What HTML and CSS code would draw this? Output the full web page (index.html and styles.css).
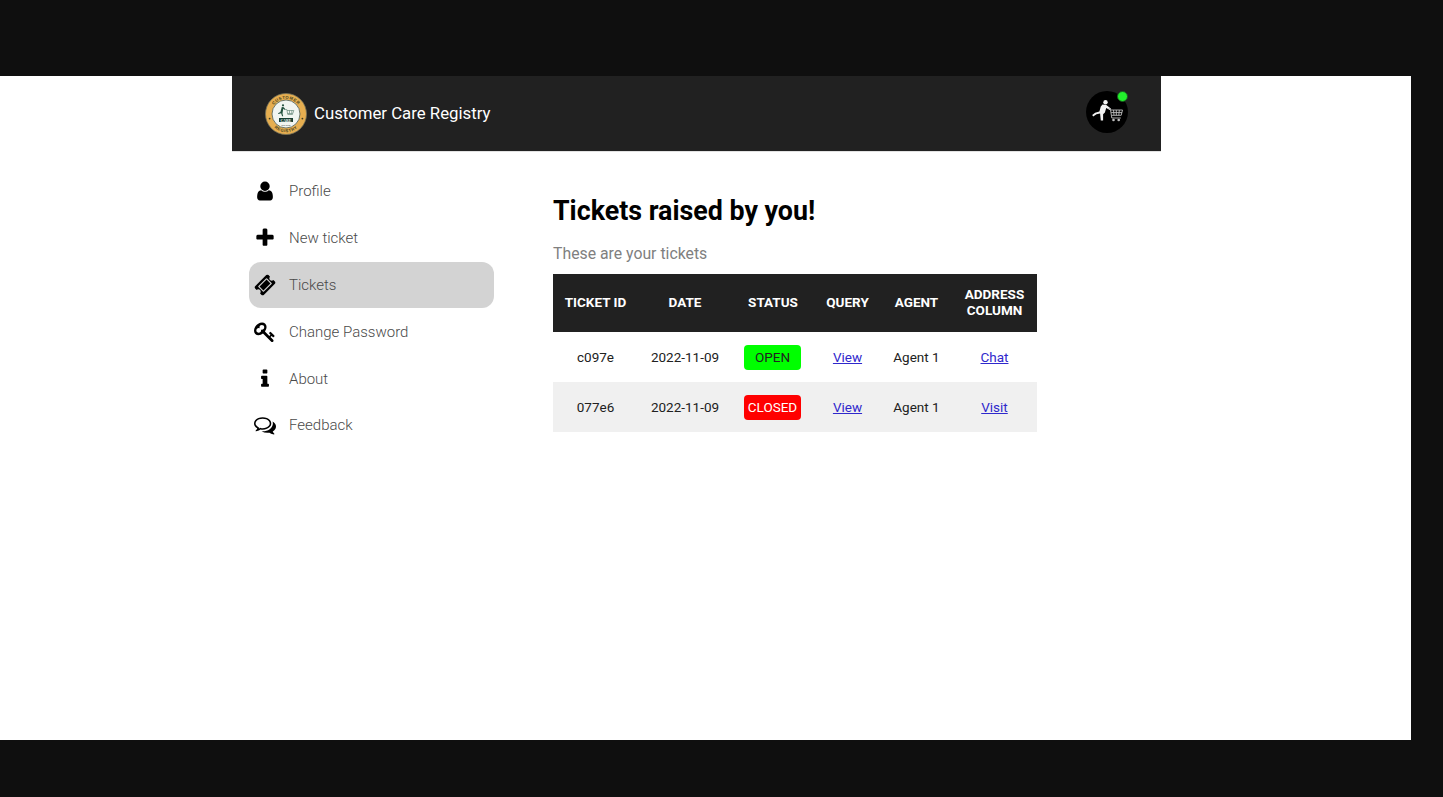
FILE: index.html
```html
<!DOCTYPE html>
<html lang="en">
<head>
<meta charset="utf-8">
<title>Customer Care Registry</title>
<link rel="stylesheet" href="styles.css">
</head>
<body>
<div class="stage">
  <div class="app">
    <header class="navbar">
      <div class="brand">
        <svg class="logo" viewBox="0 0 42 42">
          <defs>
            <path id="arcTop" d="M5.800 21a15.200 15.200 0 0 1 30.400 0"/>
            <path id="arcBottom" d="M2.900 21a18.100 18.100 0 0 0 36.200 0"/>
          </defs>
          <circle cx="21" cy="21" r="20.500" fill="#e6ae50" stroke="#77745c" stroke-width=".8"/>
          <circle cx="21" cy="21" r="14" fill="#f1f5f1" stroke="#4c5a50" stroke-width=".8"/>
          <text class="logo-arc"><textPath href="#arcTop" startOffset="50%" text-anchor="middle">CUSTOMER</textPath></text>
          <text class="logo-arc"><textPath href="#arcBottom" startOffset="50%" text-anchor="middle">REGISTRY</textPath></text>
          <circle cx="18" cy="12.300" r="1.100" fill="#23523f"/>
          <path d="M16.800 14l2 .3 1.800 2.300-.6.5-1.700-1.300-.6 3.200-.2 1.500.7 2.700h-1.100l-1-3-2.600.8-.5-.8 2.400-1.300z" fill="#23523f"/>
          <path d="M20.500 16.500h1.300l1 5h5M22 17.500h6.800l-1 3h-5.300M24.500 17.500v3M26.800 17.500v3" fill="none" stroke="#54786a" stroke-width=".6"/>
          <rect x="14" y="25" width="14" height="4" fill="#173f33"/>
          <text class="logo-care" x="21" y="28.500">CARE</text>
          <text class="logo-est" x="21" y="32.500">EST 2022</text>
          <circle cx="4.600" cy="25.600" r=".9" fill="#3c3a20"/>
          <circle cx="37.400" cy="25.600" r=".9" fill="#3c3a20"/>
        </svg>
        <span class="brand-name">Customer Care Registry</span>
      </div>
      <div class="avatar">
        <svg class="avatar-art" viewBox="0 0 42 42">
          <circle cx="21" cy="21" r="21" fill="#000"/>
          <circle cx="19.500" cy="11.200" r="2.200" fill="#f2f2f2"/>
          <path d="M16.500 13.600l3.800.4 4.500 3.500-1 1.400-3.600-2-1.300 4.500-1.800 1.800 0 6.200h-2.300l-.7-6.800-3.600.6-3.300 2.300-1-1.400 2.900-2.400 4.300-1.300 1.400-4.800z" fill="#f2f2f2"/>
          <path d="M22.300 17.500h2l1.500 9.500h9M24.700 19h11.800l-1.300 5.300h-9.600M27.500 19l.5 5.300M30.300 19v5.300M33.300 19l-.5 5.300M25.100 21.600h10.900" fill="none" stroke="#bdbdbd" stroke-width=".9"/>
          <circle cx="27.500" cy="29" r="1.300" fill="#bdbdbd"/>
          <circle cx="32.700" cy="29" r="1.300" fill="#bdbdbd"/>
        </svg>
        <span class="status-dot"></span>
      </div>
    </header>

    <div class="content">
      <nav class="sidebar">
        <a class="side-item">
          <span class="side-icon"><svg viewBox="0 0 1792 1792"><path d="M1536 1399q0 109-62.500 187t-150.500 78h-854q-88 0-150.500-78t-62.500-187q0-85 8.500-160.500t31.500-152 58.500-131 94-89 134.500-34.500q131 128 313 128t313-128q76 0 134.500 34.500t94 89 58.500 131 31.500 152 8.500 160.500zm-256-887q0 159-112.500 271.500t-271.500 112.500-271.500-112.500-112.500-271.500 112.500-271.500 271.500-112.500 271.500 112.500 112.500 271.500z"/></svg></span>
          <span>Profile</span>
        </a>
        <a class="side-item">
          <span class="side-icon"><svg viewBox="0 0 1792 1792"><path d="M1600 736v192q0 40-28 68t-68 28h-416v416q0 40-28 68t-68 28h-192q-40 0-68-28t-28-68v-416h-416q-40 0-68-28t-28-68v-192q0-40 28-68t68-28h416v-416q0-40 28-68t68-28h192q40 0 68 28t28 68v416h416q40 0 68 28t28 68z"/></svg></span>
          <span>New ticket</span>
        </a>
        <a class="side-item active">
          <span class="side-icon"><svg viewBox="0 0 1792 1792"><path d="M1024 452l316 316-572 572-316-316zm-211 979l618-618q19-19 19-45t-19-45l-362-362q-18-18-45-18t-45 18l-618 618q-19 19-19 45t19 45l362 362q18 18 45 18t45-18zm889-637l-907 908q-37 37-90.500 37t-90.500-37l-126-126q56-56 56-136t-56-136-136-56-136 56l-125-126q-37-37-37-90.500t37-90.500l907-906q37-37 90.500-37t90.500 37l125 125q-56 56-56 136t56 136 136 56 136-56l126 125q37 37 37 90.500t-37 90.500z"/></svg></span>
          <span>Tickets</span>
        </a>
        <a class="side-item">
          <span class="side-icon"><svg viewBox="0 0 1792 1792"><path d="M832 512q0-80-56-136t-136-56-136 56-56 136q0 42 19 83-41-19-83-19-80 0-136 56t-56 136 56 136 136 56 136-56 56-136q0-42-19-83 41 19 83 19 80 0 136-56t56-136zm851 704q0 17-49 66t-66 49q-9 0-28.500-16t-36.500-33-38.500-40-24.500-26l-96 96 220 220q28 28 28 68 0 42-39 81t-81 39q-40 0-68-28l-671-671q-176 131-365 131-163 0-265.500-102.500t-102.500-265.500q0-160 95-313t248-248 313-95q163 0 265.500 102.500t102.500 265.500q0 189-131 365l355 355 96-96q-3-3-26-24.500t-40-38.500-33-36.500-16-28.500q0-17 49-66t66-49q13 0 23 10 6 6 46 44.500t82 79.500 86.500 86 73 78 28.500 41z"/></svg></span>
          <span>Change Password</span>
        </a>
        <a class="side-item">
          <span class="side-icon"><svg viewBox="0 0 1792 1792"><path d="M1216 1344v128q0 26-19 45t-45 19h-512q-26 0-45-19t-19-45v-128q0-26 19-45t45-19h64v-384h-64q-26 0-45-19t-19-45v-128q0-26 19-45t45-19h384q26 0 45 19t19 45v576h64q26 0 45 19t19 45zm-128-1152v192q0 26-19 45t-45 19h-256q-26 0-45-19t-19-45v-192q0-26 19-45t45-19h256q26 0 45 19t19 45z"/></svg></span>
          <span>About</span>
        </a>
        <a class="side-item">
          <span class="side-icon"><svg viewBox="0 0 1792 1792"><path d="M704 384q-153 0-286 52t-211.500 141-78.500 191q0 82 53 158t149 132l97 56-35 84q34-20 62-39l44-31 53 10q78 14 153 14 153 0 286-52t211.500-141 78.500-191-78.500-191-211.500-141-286-52zm0-128q191 0 353.500 68.500t256.500 186.500 94 257-94 257-256.500 186.500-353.500 68.500q-86 0-176-16-124 88-278 128-36 9-86 16h-3q-11 0-20.500-8t-11.500-21q-1-3-1-6.500t.5-6.500 2-6l2.500-5 3.500-5.500 4-5 4.500-5 4-4.500q5-6 23-25t26-29.500 22.500-29 25-38.500 20.500-44q-124-72-195-177t-71-224q0-139 94-257t256.500-186.500 353.500-68.500zm822 1169q10 24 20.500 44t25 38.500 22.500 29 26 29.500 23 25q1 1 4 4.500t4.500 5 4 5 3.500 5.500l2.500 5 2 6 .5 6.500-1 6.500q-3 14-13 22t-22 7q-50-7-86-16-154-40-278-128-90 16-176 16-271 0-472-132 58 4 88 4 161 0 309-45t264-129q125-92 192-212t67-254q0-77-23-152 129 71 204 178t75 230q0 120-71 224.500t-195 176.500z"/></svg></span>
          <span>Feedback</span>
        </a>
      </nav>

      <main class="main">
        <h1 class="title">Tickets raised by you!</h1>
        <p class="subtitle">These are your tickets</p>
        <table class="tickets">
          <colgroup>
            <col class="col-id">
            <col class="col-date">
            <col class="col-status">
            <col class="col-query">
            <col class="col-agent">
            <col class="col-address">
          </colgroup>
          <thead>
            <tr>
              <th>TICKET ID</th>
              <th>DATE</th>
              <th>STATUS</th>
              <th>QUERY</th>
              <th>AGENT</th>
              <th>ADDRESS<br>COLUMN</th>
            </tr>
          </thead>
          <tbody>
            <tr>
              <td>c097e</td>
              <td>2022-11-09</td>
              <td><span class="badge open">OPEN</span></td>
              <td><a class="link" href="#">View</a></td>
              <td>Agent 1</td>
              <td><a class="link" href="#">Chat</a></td>
            </tr>
            <tr class="alt">
              <td>077e6</td>
              <td>2022-11-09</td>
              <td><span class="badge closed">CLOSED</span></td>
              <td><a class="link" href="#">View</a></td>
              <td>Agent 1</td>
              <td><a class="link" href="#">Visit</a></td>
            </tr>
          </tbody>
        </table>
      </main>
    </div>
  </div>
</div>
</body>
</html>
```

FILE: styles.css
```css
* {
  box-sizing: border-box;
}

html,
body {
  margin: 0;
  height: 100%;
}

body {
  background: #0f0f0f;
  padding-top: 76px;
  font-family: Roboto, "Liberation Sans", sans-serif;
  overflow: hidden;
}

.stage {
  width: 1411px;
  height: 664px;
  background: #fff;
  padding-left: 232px;
}

.app {
  width: 929px;
}

.navbar {
  height: 75px;
  background: #212121;
  display: flex;
  align-items: center;
  justify-content: space-between;
  padding: 0 33px;
  box-shadow: 0 1px 0 #e2e2e2;
}

.brand {
  display: flex;
  align-items: center;
  gap: 7px;
}

.logo {
  width: 42px;
  height: 42px;
  display: block;
}

.logo-arc {
  font: 700 4.200px "Liberation Sans", sans-serif;
  letter-spacing: .55px;
  fill: #45421f;
}

.logo-care {
  font: 700 3.800px "Liberation Serif", serif;
  fill: #fff;
  text-anchor: middle;
}

.logo-est {
  font: 400 2px "Liberation Sans", sans-serif;
  fill: #3c4a42;
  text-anchor: middle;
}

.brand-name {
  color: #fff;
  font-size: 16.800px;
  line-height: 20px;
  margin-top: -1px;
}

.avatar {
  position: relative;
  width: 42px;
  height: 42px;
  margin-top: -4px;
}

.avatar-art {
  width: 42px;
  height: 42px;
  display: block;
}

.status-dot {
  position: absolute;
  top: 0;
  right: 0;
  width: 11px;
  height: 11px;
  border-radius: 50%;
  background: #22f02c;
  border: 1px solid #1b5a20;
}

.content {
  display: flex;
  align-items: flex-start;
}

.sidebar {
  width: 245px;
  margin: 17px 0 0 17px;
  display: flex;
  flex-direction: column;
  flex-shrink: 0;
}

.side-item {
  height: 46.800px;
  display: flex;
  align-items: center;
  border-radius: 12px;
  color: #4a4a4a;
  font-size: 15px;
  font-weight: 300;
}

.side-item.active {
  background: #d3d3d3;
}

.side-icon {
  width: 40px;
  padding-right: 9px;
  display: flex;
  justify-content: center;
  flex-shrink: 0;
}

.side-icon svg {
  width: 22px;
  height: 22px;
  display: block;
  fill: #000;
}

.main {
  margin-left: 59px;
  padding-top: 43px;
}

.title {
  margin: 0;
  color: #000;
  font-size: 26.800px;
  line-height: 34px;
  font-weight: 700;
}

.subtitle {
  margin: 16px 0 0;
  color: #808080;
  font-size: 15.800px;
  line-height: 20px;
}

.tickets {
  margin-top: 10px;
  width: 484px;
  table-layout: fixed;
  border-collapse: collapse;
  font-size: 13.500px;
  color: #212121;
  text-align: center;
}

.col-id { width: 85px; }
.col-date { width: 94px; }
.col-status { width: 82px; }
.col-query { width: 67px; }
.col-agent { width: 71px; }
.col-address { width: 85px; }

.tickets th {
  height: 58px;
  padding: 0 0 2px;
  background: #212121;
  color: #fff;
  font-size: 13.500px;
  line-height: 16px;
  font-weight: 700;
}

.tickets td {
  height: 50px;
  padding: 0;
}

.alt td {
  background: #f0f0f0;
}

.badge {
  display: inline-block;
  padding: 0 4px;
  min-width: 57px;
  height: 25px;
  line-height: 25px;
  border-radius: 4px;
  margin-right: 1px;
}

.open {
  background: #00ff00;
}

.closed {
  background: #ff0000;
  color: #fff;
}

.link {
  color: #2f28cc;
}
```
